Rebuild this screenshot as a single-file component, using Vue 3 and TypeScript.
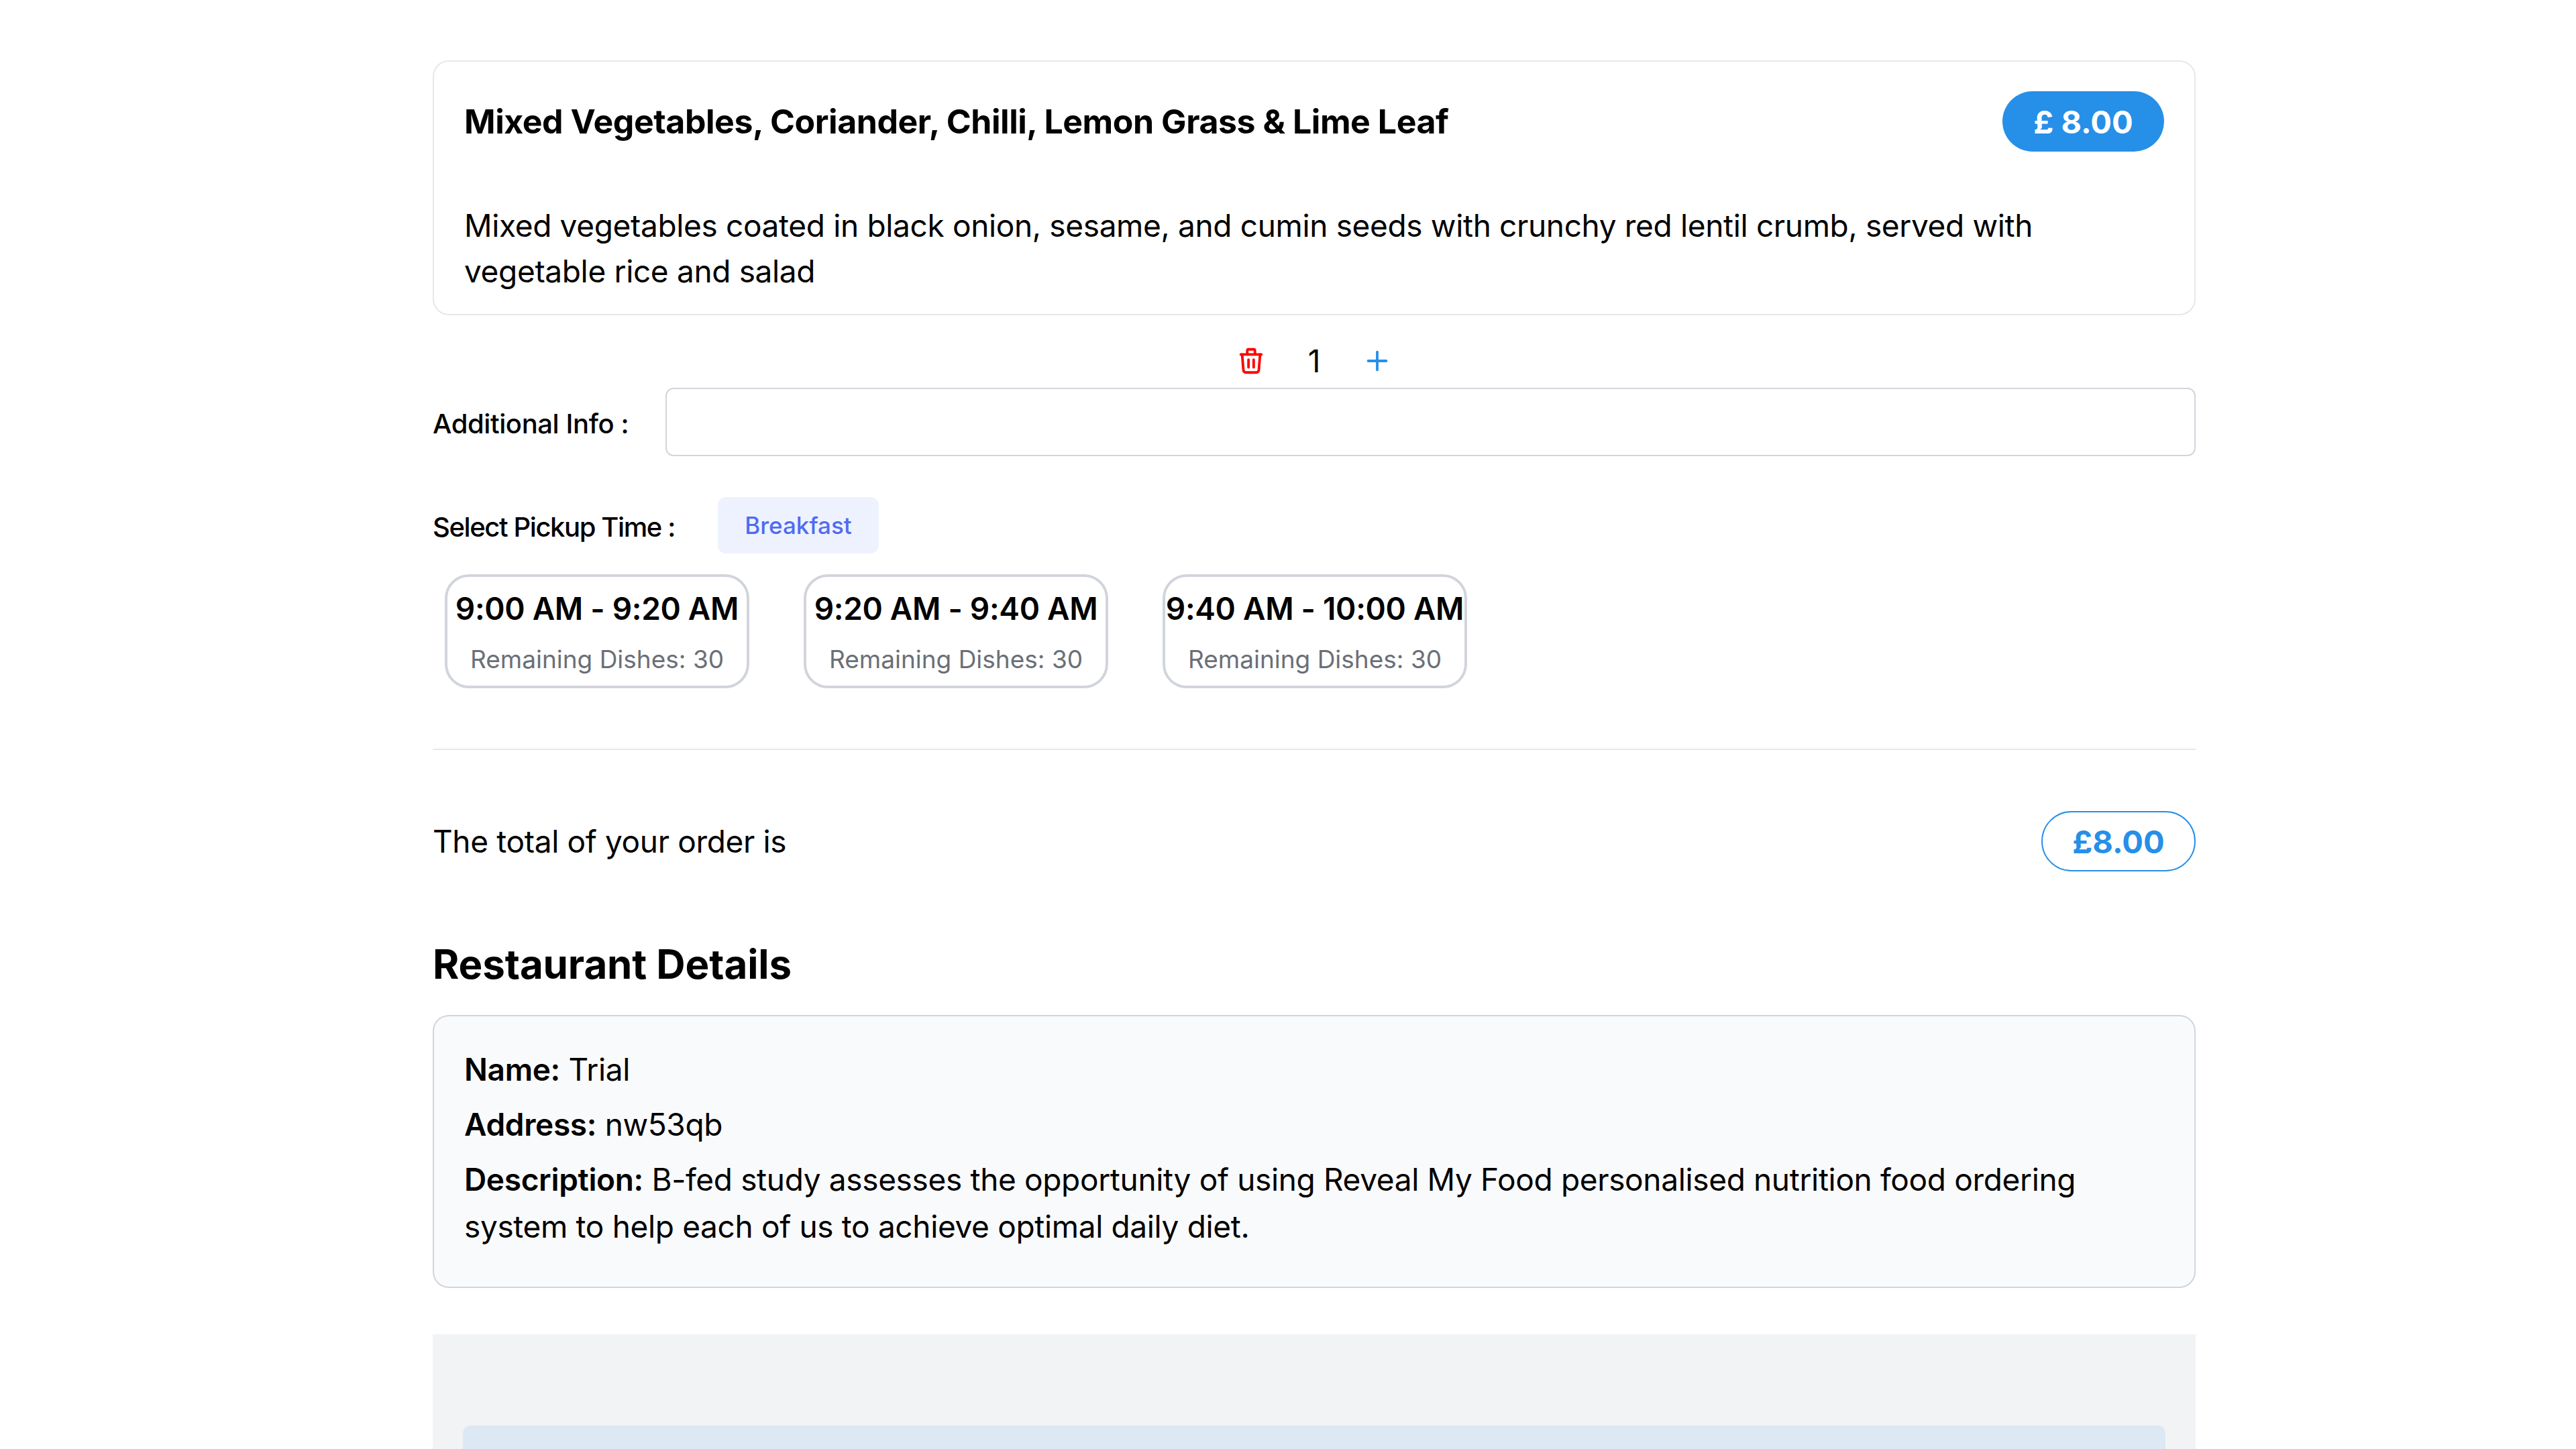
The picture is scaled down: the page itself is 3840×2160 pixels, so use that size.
<script setup lang="ts">
const slots = ['9:00 AM - 9:20 AM', '9:20 AM - 9:40 AM', '9:40 AM - 10:00 AM']
</script>

<template>
  <div class="page">
    <section class="item">
      <div class="item-head">
        <h3 class="item-title">Mixed Vegetables, Coriander, Chilli, Lemon Grass &amp; Lime Leaf</h3>
        <span class="price">£ 8.00</span>
      </div>
      <p class="item-desc">Mixed vegetables coated in black onion, sesame, and cumin seeds with crunchy red lentil crumb, served with vegetable rice and salad</p>
    </section>

    <div class="qty">
      <svg class="icon" viewBox="0 0 24 24" fill="none" stroke="#ff0000" stroke-width="2" stroke-linecap="round" stroke-linejoin="round">
        <path d="M4 7h16" />
        <path d="M5 7l1 12a2 2 0 0 0 2 2h8a2 2 0 0 0 2-2l1-12" />
        <path d="M9 7V4a1 1 0 0 1 1-1h4a1 1 0 0 1 1 1v3" />
        <path d="M10 11v6M14 11v6" />
      </svg>
      <span class="count">1</span>
      <svg class="icon" viewBox="0 0 24 24" fill="none" stroke="#268fe8" stroke-width="2" stroke-linecap="round">
        <path d="M12 5v14M5 12h14" />
      </svg>
    </div>

    <div class="info-row">
      <label class="field-label info-label">Additional Info :</label>
      <input class="info-input" type="text" />
    </div>

    <div class="pickup-row">
      <span class="field-label pickup-label">Select Pickup Time :</span>
      <span class="tag">Breakfast</span>
    </div>

    <div class="slots">
      <div v-for="slot in slots" :key="slot" class="slot">
        <div class="slot-time">{{ slot }}</div>
        <div class="slot-left">Remaining Dishes: 30</div>
      </div>
    </div>

    <hr class="divider" />

    <div class="total">
      <span class="total-text">The total of your order is</span>
      <span class="total-pill">£8.00</span>
    </div>

    <h2 class="heading">Restaurant Details</h2>
    <section class="details">
      <p class="line"><strong>Name:</strong> Trial</p>
      <p class="line"><strong>Address:</strong> nw53qb</p>
      <p class="line"><strong>Description:</strong> B-fed study assesses the opportunity of using Reveal My Food personalised nutrition food ordering system to help each of us to achieve optimal daily diet.</p>
    </section>

    <section class="footer-block">
      <div class="footer-inner"></div>
    </section>
  </div>
</template>

<style>
html, body { margin: 0; background: #fff; }
body { overflow: hidden; height: 2160px; }
</style>

<style scoped>
.page {
  box-sizing: border-box;
  width: 2628px;
  margin-left: 645px;
  padding-top: 90px;
  height: 2160px;
  overflow: hidden;
  font-family: Inter, "Liberation Sans", sans-serif;
  color: #000;
}
.item {
  box-sizing: border-box;
  height: 380px;
  border: 2px solid #e5e7eb;
  border-radius: 24px;
  padding: 44px 45px 0;
}
.item-head {
  display: flex;
  justify-content: space-between;
  align-items: center;
  height: 90px;
}
.item-title {
  margin: 0;
  font-size: 50px;
  font-weight: 700;
  letter-spacing: -0.45px;
}
.price {
  box-sizing: border-box;
  width: 241px;
  height: 90px;
  border-radius: 45px;
  background: #268fe8;
  color: #fff;
  font-size: 47px;
  font-weight: 700;
  display: flex;
  align-items: center;
  justify-content: center;
}
.item-desc {
  margin: 76px 0 0;
  font-size: 46px;
  letter-spacing: -0.35px;
  line-height: 68px;
}
.qty {
  box-sizing: border-box;
  height: 108px;
  padding-top: 28px;
  display: flex;
  align-items: center;
  justify-content: center;
  gap: 57px;
}
.icon { width: 46px; height: 46px; }
.count { font-size: 46px; width: 28px; text-align: center; }
.info-row {
  display: flex;
  align-items: center;
}
.field-label { font-size: 40px; font-weight: 500; padding-top: 4px; }
.info-label { width: 347px; letter-spacing: -0.4px; }
.info-input {
  box-sizing: border-box;
  flex: 1;
  height: 102px;
  border: 2px solid #d1d5db;
  border-radius: 12px;
  background: #fff;
}
.pickup-row {
  display: flex;
  align-items: center;
  margin-top: 61px;
}
.pickup-label { width: 425px; letter-spacing: -1.4px; }
.tag {
  box-sizing: border-box;
  width: 240px;
  height: 84px;
  border-radius: 12px;
  background: #eef2ff;
  color: #4f6cf0;
  font-size: 35px;
  font-weight: 500;
  display: flex;
  align-items: center;
  justify-content: center;
}
.slots {
  display: flex;
  gap: 81px;
  margin: 31px 0 0 18px;
}
.slot {
  box-sizing: border-box;
  width: 454px;
  height: 170px;
  border: 4px solid #d1d5db;
  border-radius: 36px;
  display: flex;
  flex-direction: column;
  align-items: center;
  padding-top: 19px;
}
.slot-time { font-size: 46px; font-weight: 600; letter-spacing: -0.3px; white-space: nowrap; }
.slot-left { font-size: 37px; color: #6b6f76; margin-top: 25px; }
.divider {
  border: 0;
  border-top: 2px solid #e5e7eb;
  margin: 90px 0 0;
}
.total {
  display: flex;
  justify-content: space-between;
  align-items: center;
  margin-top: 91px;
}
.total-text { font-size: 46px; letter-spacing: -0.35px; }
.total-pill {
  box-sizing: border-box;
  width: 230px;
  height: 90px;
  border: 2px solid #268fe8;
  border-radius: 45px;
  color: #268fe8;
  font-size: 47px;
  font-weight: 700;
  display: flex;
  align-items: center;
  justify-content: center;
}
.heading {
  margin: 102px 0 0;
  font-size: 60px;
  line-height: 73px;
  font-weight: 700;
  letter-spacing: -0.1px;
}
.details {
  box-sizing: border-box;
  height: 407px;
  margin-top: 39px;
  border: 2px solid #d1d5db;
  border-radius: 24px;
  background: #f9fafb;
  padding: 44px 45px 0;
}
.line {
  margin: 0 0 12px;
  font-size: 46px;
  letter-spacing: -0.35px;
  line-height: 70px;
}
.line strong { font-weight: 600; }
.footer-block {
  margin: 69px -1px 0;
  height: 300px;
  background: #f2f3f5;
  padding: 136px 46px 0;
}
.footer-inner {
  height: 200px;
  background: #dce8f3;
  border-radius: 12px;
}
</style>
